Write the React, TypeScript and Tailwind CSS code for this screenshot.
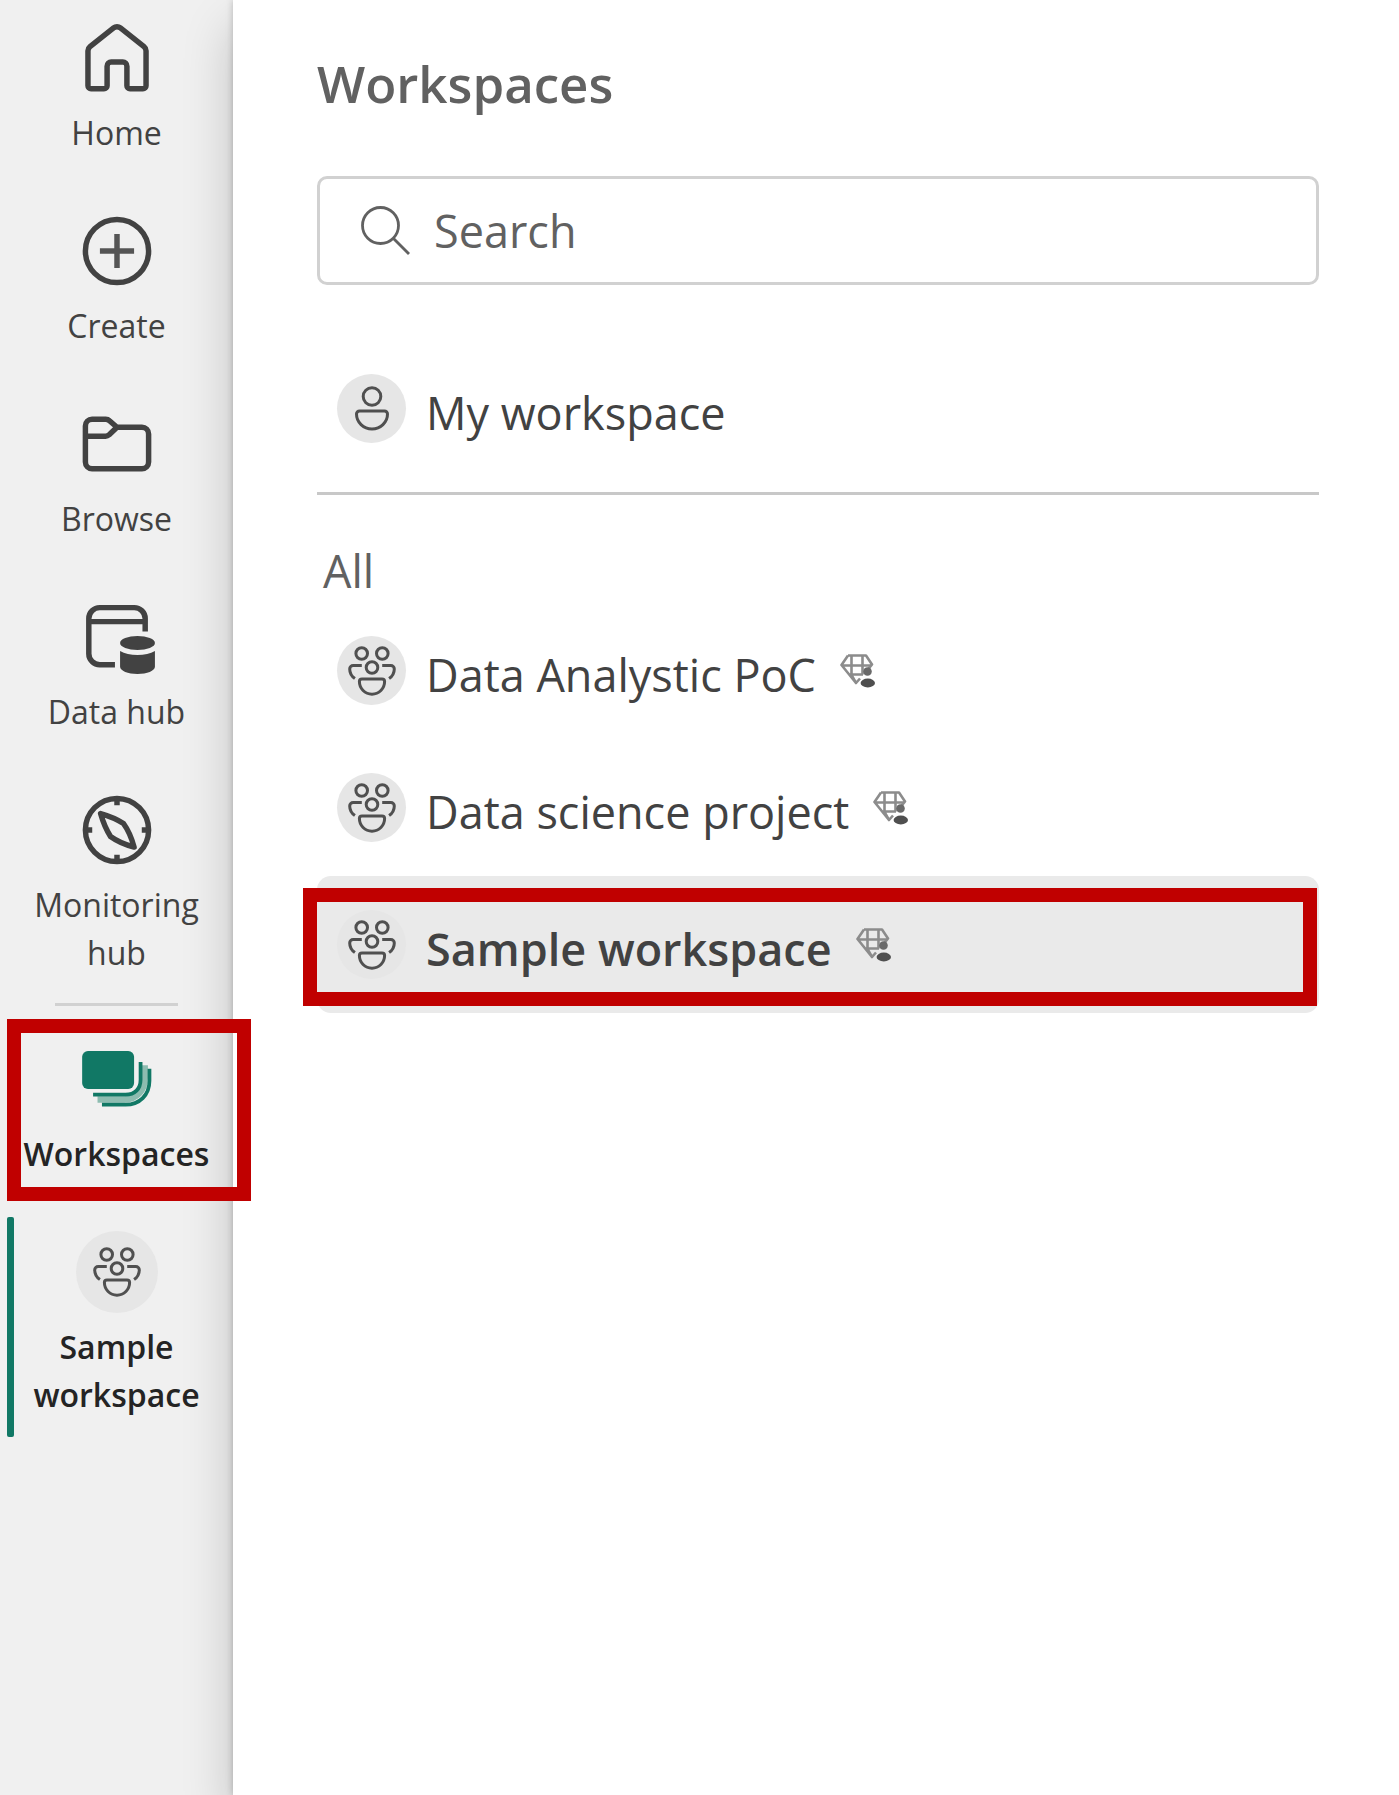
import type { ReactNode } from "react";

function NavIcon({ children }: { children: ReactNode }) {
  return (
    <svg
      viewBox="0 0 24 24"
      className="size-[82px]"
      fill="none"
      stroke="#424242"
      strokeWidth="1.6"
      strokeLinejoin="round"
      aria-hidden="true"
    >
      {children}
    </svg>
  );
}

const HomeIcon = () => (
  <NavIcon>
    <path d="M4.4 21h3.8a.9.9 0 0 0 .9-.9v-5.7a1.2 1.2 0 0 1 1.2-1.2h3.4a1.2 1.2 0 0 1 1.2 1.2v5.7a.9.9 0 0 0 .9.9h3.8a.9.9 0 0 0 .9-.9V9.9a1.600 1.600 0 0 0-.6-1.2L13 3.200a1.600 1.600 0 0 0-2 0L4.100 8.700a1.600 1.600 0 0 0-.6 1.200v10.200a.9.9 0 0 0 .9.9z" />
  </NavIcon>
);

const CreateIcon = () => (
  <NavIcon>
    <circle cx="12" cy="12" r="9.25" />
    <path d="M12 7v10M7 12h10" stroke="#555555" />
  </NavIcon>
);

const BrowseIcon = () => (
  <NavIcon>
    <path d="M2.75 9.7H8.6a1.6 1.6 0 0 0 1.1-.4L12 7.1 9.8 5.2a1.6 1.6 0 0 0-1.1-.45H4.700A1.950 1.950 0 0 0 2.750 6.700v10.600A1.950 1.950 0 0 0 4.700 19.250h14.600A1.950 1.950 0 0 0 21.250 17.300V9.050A1.950 1.950 0 0 0 19.300 7.100h-7.300" />
  </NavIcon>
);

const DataHubIcon = () => (
  <NavIcon>
    <path d="M20.25 10.4V6.6A3.2 3.2 0 0 0 17 3.4H7a3.2 3.2 0 0 0-3.25 3.2v10.3A3.2 3.2 0 0 0 7 20.1h4.4M3.75 7.5h16.5" />
    <g fill="#424242" stroke="none">
      <ellipse cx="18" cy="13.75" rx="5.1" ry="2.05" />
      <path d="M12.9 16.1c1.3.8 3.1 1.2 5.1 1.2s3.8-.4 5.1-1.2v4.6c0 1.2-2.3 2.1-5.1 2.1s-5.1-.9-5.1-2.1z" />
    </g>
  </NavIcon>
);

const CompassIcon = () => (
  <NavIcon>
    <circle cx="12" cy="12" r="9.25" />
    <path d="M12 2.75v2M12 19.25v2M2.75 12h2M19.25 12h2" />
    <path d="M7.2 7.2C10 8 12.200 9 13.900 10.100 15.200 11.900 16.200 14 17 17 14 16.200 11.900 15.200 10.100 13.900 9 12.200 8 10 7.200 7.200z" />
  </NavIcon>
);

const StackIcon = () => (
  <svg viewBox="0 0 24 24" className="size-[82px]" fill="none" aria-hidden="true">
    <path d="M20.1 8v3.6c0 3.6-2.2 6.4-6 6.4H6.3" stroke="#8dbcb0" strokeWidth="1.9" />
    <path d="M18.9 7v5.2c0 2.7-1.7 4.4-4.4 4.4H5" stroke="#117865" strokeWidth="1.1" />
    <path d="M21.5 9v3.5c0 4.2-2.9 7-7 7H7.6" stroke="#117865" strokeWidth="1.1" />
    <rect x="1.8" y="3.8" width="15.2" height="11.1" rx="1.7" fill="#117865" />
  </svg>
);

const PeopleIcon = () => (
  <svg
    viewBox="0 0 48 50"
    className="h-[50px] w-12"
    fill="none"
    stroke="#505050"
    strokeWidth="3"
    aria-hidden="true"
  >
    <circle cx="13.7" cy="7.5" r="5.8" />
    <circle cx="34.3" cy="7.5" r="5.8" />
    <circle cx="24" cy="21.5" r="5.8" />
    <path d="M13.8 19.5H5.200a3.500 3.500 0 0 0-3.500 3.500c0 4 1.800 7.200 5.200 9.600M34.200 19.500h8.600a3.500 3.500 0 0 1 3.500 3.500c0 4-1.800 7.200-5.200 9.600" />
    <path d="M14 33h20a2.600 2.600 0 0 1 2.600 2.600A12.600 12.600 0 0 1 11.400 35.600 2.600 2.600 0 0 1 14 33z" />
  </svg>
);

const PersonIcon = () => (
  <svg
    viewBox="0 0 40 48"
    className="h-12 w-10"
    fill="none"
    stroke="#505050"
    strokeWidth="3"
    aria-hidden="true"
  >
    <circle cx="20" cy="11.5" r="8.8" />
    <path d="M7.500 26h25a3 3 0 0 1 3 3A15.500 15 0 0 1 4.500 29a3 3 0 0 1 3-3z" />
  </svg>
);

const PremiumIcon = () => (
  <svg
    viewBox="0 0 36 36"
    className="size-9 shrink-0"
    fill="none"
    stroke="#8c8c8c"
    strokeWidth="2.6"
    strokeLinejoin="round"
    aria-hidden="true"
  >
    <path d="M8 2.500h18l6 9-4 5M8 2.500l-6.500 9.500L16 30l4-4.500M1.500 12.500H32M11.500 2.500v19.500L16 30M22.500 2.500v19M8.500 21.500H23" />
    <circle cx="27.5" cy="18.5" r="4.3" fill="#6a6a6a" stroke="none" />
    <ellipse cx="27.8" cy="30" rx="7.2" ry="4.4" fill="#4f4f4f" stroke="none" />
  </svg>
);

const SearchIcon = () => (
  <svg
    viewBox="0 0 52 52"
    className="size-[52px] shrink-0"
    fill="none"
    stroke="#616161"
    strokeWidth="2.8"
    aria-hidden="true"
  >
    <circle cx="20.5" cy="20.5" r="18" />
    <path d="M33.5 33.5L49 49" />
  </svg>
);

function NavItem({
  icon,
  label,
  active = false,
  children,
}: {
  icon: ReactNode;
  label: string;
  active?: boolean;
  children?: ReactNode;
}) {
  return (
    <li className="relative">
      <button
        type="button"
        className={
          active
            ? "flex w-full flex-col items-center gap-2.5 px-4 text-[32px] leading-[48px] font-semibold text-[#242424]"
            : "flex w-full flex-col items-center gap-2.5 px-4 text-[32px] leading-[48px] text-[#424242]"
        }
      >
        {icon}
        <span>{label}</span>
      </button>
      {children}
    </li>
  );
}

function WorkspaceRow({
  name,
  icon,
  premium = false,
  selected = false,
}: {
  name: string;
  icon: ReactNode;
  premium?: boolean;
  selected?: boolean;
}) {
  return (
    <li className="relative">
      <button
        type="button"
        className={
          selected
            ? "flex h-[137px] w-full items-center rounded-[14px] bg-[#eaeaea] px-5 text-left text-[45px] leading-[62px] font-semibold text-[#424242]"
            : "flex h-[137px] w-full items-center rounded-[14px] px-5 text-left text-[45px] leading-[62px] text-[#424242]"
        }
      >
        <span className="mr-5 flex size-[69px] shrink-0 items-center justify-center rounded-full bg-[#e6e6e6]">
          {icon}
        </span>
        <span className="mr-6 pt-2">{name}</span>
        {premium && <PremiumIcon />}
      </button>
      {selected && (
        <span className="pointer-events-none absolute top-3 right-0.5 bottom-[7px] -left-3.5 border-[14px] border-[#c00000]" />
      )}
    </li>
  );
}

export default function App() {
  return (
    <div className="flex min-h-screen overflow-hidden bg-white font-['Open_Sans','Noto_Sans',sans-serif]">
      <nav aria-label="Main" className="w-[233px] shrink-0 bg-[#f0f0f0] pt-[17px] pb-10">
        <ul className="relative z-20 flex flex-col gap-[53px]">
          <NavItem icon={<HomeIcon />} label="Home" />
          <NavItem icon={<CreateIcon />} label="Create" />
          <NavItem icon={<BrowseIcon />} label="Browse" />
          <NavItem icon={<DataHubIcon />} label="Data hub" />
          <NavItem icon={<CompassIcon />} label="Monitoring hub" />
        </ul>
        <hr className="relative z-20 mx-[55px] mt-[26px] mb-8 border-t-3 border-[#d1d1d1]" />
        <ul className="relative z-20 flex flex-col gap-[53px]">
          <NavItem icon={<StackIcon />} label="Workspaces" active>
            <span className="pointer-events-none absolute -top-[19px] -right-[18px] -bottom-[23px] left-[7px] border-[14px] border-[#c00000]" />
          </NavItem>
          <NavItem
            icon={
              <span className="flex size-[82px] items-center justify-center rounded-full bg-[#e6e6e6]">
                <PeopleIcon />
              </span>
            }
            label="Sample workspace"
            active
          >
            <span className="absolute -top-3.5 -bottom-[18px] left-[7px] w-[7px] rounded-xs bg-[#117865]" />
          </NavItem>
        </ul>
      </nav>

      <main className="z-10 min-w-0 flex-1 bg-white pt-12 pr-20 pb-10 pl-[84px] shadow-[0_0_7px_rgba(0,0,0,0.22),0_27px_48px_rgba(0,0,0,0.2)]">
        <h1 className="text-[51px] leading-[70px] font-semibold text-[#616161]">Workspaces</h1>
        <label className="mt-[58px] flex h-[109px] items-center gap-[22px] rounded-[10px] border-3 border-[#d1d1d1] px-10">
          <SearchIcon />
          <input
            type="search"
            aria-label="Search"
            placeholder="Search"
            className="min-w-0 flex-1 bg-transparent text-[45px] text-[#424242] outline-none placeholder:text-[#616161]"
          />
        </label>
        <ul className="mt-[55px]">
          <WorkspaceRow name="My workspace" icon={<PersonIcon />} />
        </ul>
        <hr className="mt-[15px] border-t-3 border-[#c8c8c8]" />
        <h2 className="mt-[45px] pl-1.5 text-[45px] leading-[62px] text-[#616161]">All</h2>
        <ul>
          <WorkspaceRow name="Data Analystic PoC" icon={<PeopleIcon />} premium />
          <WorkspaceRow name="Data science project" icon={<PeopleIcon />} premium />
          <WorkspaceRow name="Sample workspace" icon={<PeopleIcon />} premium selected />
        </ul>
      </main>
    </div>
  );
}
